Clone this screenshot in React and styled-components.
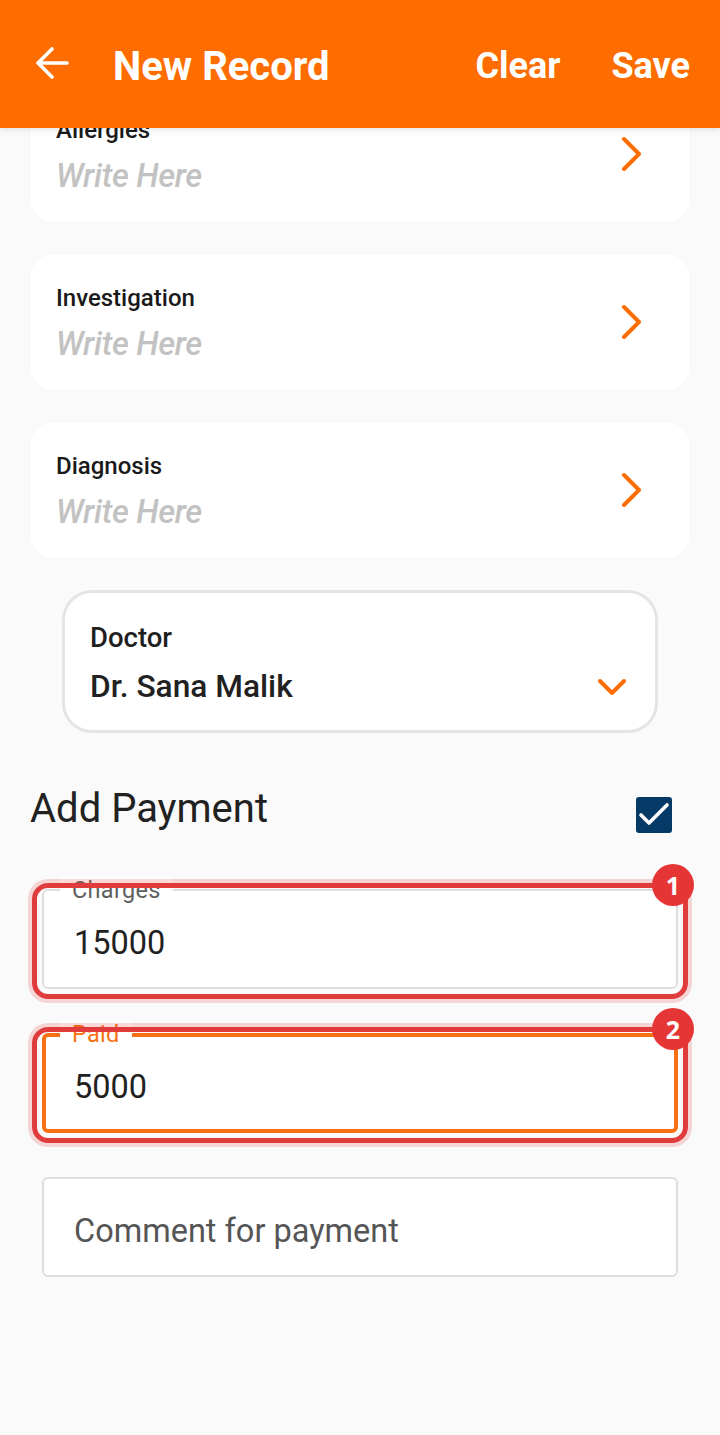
import React from 'react';
import styled, { createGlobalStyle } from 'styled-components';

const GlobalStyle = createGlobalStyle`
  html, body {
    margin: 0;
    padding: 0;
    background: #fafafa;
  }
  * {
    box-sizing: border-box;
  }
`;

const Root = styled.div`
  width: 720px;
  height: 1435px;
  overflow: hidden;
  background: #fafafa;
  font-family: Roboto, 'Liberation Sans', sans-serif;
`;

const Header = styled.header`
  position: relative;
  z-index: 2;
  height: 128px;
  background: #ff6d00;
  box-shadow: 0 2px 6px rgba(0, 0, 0, 0.1);
  padding: 4px 30px 0 36px;
  display: flex;
  align-items: center;
  color: #fff;
`;

const BackIcon = styled.svg`
  width: 33px;
  height: 32px;
  margin-right: 44px;
  margin-top: -6px;
  fill: none;
  stroke: #fff;
  stroke-width: 3.6;
  stroke-linecap: round;
  stroke-linejoin: round;
`;

const Title = styled.h1`
  flex: 1;
  margin: 0;
  font-size: 40px;
  font-weight: 700;
`;

const HeaderAction = styled.span`
  font-size: 36px;
  font-weight: 700;
  margin-left: 51px;
`;

const Content = styled.main`
  margin-top: -42px;
  display: flex;
  flex-direction: column;
`;

const Card = styled.section`
  height: 136px;
  margin: 0 30px 32px;
  background: #fff;
  border-radius: 24px;
  padding: 0 49px 0 26px;
  display: flex;
  align-items: center;
  justify-content: space-between;
  box-shadow: 0 0 4px rgba(0, 0, 0, 0.02);
`;

const CardText = styled.div`
  align-self: flex-start;
  padding-top: 29px;
  display: flex;
  flex-direction: column;
`;

const CardLabel = styled.div`
  font-size: 24px;
  font-weight: 500;
  line-height: 30px;
  color: #1a1a1a;
`;

const Placeholder = styled.div`
  margin-top: 11px;
  font-size: 32.5px;
  font-style: italic;
  font-weight: 500;
  line-height: 40px;
  color: #c2c2c2;
  letter-spacing: -0.3px;
`;

const ChevronIcon = styled.svg`
  fill: none;
  stroke: #ff6d00;
  stroke-width: 4;
  stroke-linecap: round;
  stroke-linejoin: round;
`;

const DoctorSelect = styled.section`
  height: 143px;
  margin: 0 62px 0;
  background: #fff;
  border: 3px solid #e4e4e4;
  border-radius: 30px;
  padding: 28px 29px 0 25px;
`;

const DoctorLabel = styled.div`
  font-size: 27.5px;
  font-weight: 500;
  line-height: 34px;
  color: #1f1f1f;
`;

const DoctorRow = styled.div`
  margin-top: 12px;
  display: flex;
  align-items: center;
  justify-content: space-between;
`;

const DoctorName = styled.div`
  font-size: 31.7px;
  font-weight: 500;
  line-height: 40px;
  color: #212121;
`;

const PaymentRow = styled.div`
  margin: 51px 48px 0 30px;
  display: flex;
  align-items: center;
  justify-content: space-between;
`;

const PaymentTitle = styled.h2`
  margin: 0;
  font-size: 40px;
  font-weight: 400;
  line-height: 50px;
  color: #212121;
`;

const CheckBox = styled.svg`
  width: 36px;
  height: 36px;
  margin-top: 12px;
  border-radius: 3px;
  background: #063a66;
  fill: none;
  stroke: #fff;
  stroke-width: 3.6;
  stroke-linecap: round;
  stroke-linejoin: round;
`;

const Fields = styled.div`
  margin: 0 42px;
  display: flex;
  flex-direction: column;
`;

const Field = styled.div`
  position: relative;
  height: 100px;
  margin-top: ${(p) => p.$top}px;
  padding-top: 8px;
  padding-left: ${(p) => (p.$active ? '28px' : '30px')};
  background: #fff;
  border: ${(p) => (p.$active ? '4px solid #f57113' : '2px solid #dedede')};
  border-radius: 6px;
  display: flex;
  align-items: center;
  font-size: 32.5px;
  color: ${(p) => (p.$muted ? '#555' : '#212121')};
`;

const FieldLabel = styled.span`
  position: absolute;
  top: ${(p) => (p.$active ? '-16px' : '-14px')};
  left: ${(p) => (p.$active ? '14px' : '16px')};
  padding: 0 12px;
  background: #fff;
  font-size: 23.5px;
  letter-spacing: 0.3px;
  line-height: 26px;
  color: ${(p) => (p.$active ? '#f57113' : '#5f5f5f')};
`;

const Highlight = styled.div`
  position: absolute;
  top: ${(p) => -6 - p.$border}px;
  left: ${(p) => -10 - p.$border}px;
  right: ${(p) => -10 - p.$border}px;
  bottom: ${(p) => -10 - p.$border}px;
  border: 5px solid #e03c3c;
  border-radius: 16px;
  box-shadow: 0 0 0 4px rgba(224, 60, 60, 0.2);
`;

const Badge = styled.div`
  position: absolute;
  top: ${(p) => -25 - p.$border}px;
  right: ${(p) => -16 - p.$border}px;
  width: 42px;
  height: 42px;
  border-radius: 50%;
  background: #e53535;
  color: #fff;
  font-family: 'Open Sans', sans-serif;
  font-size: 25px;
  font-weight: 700;
  display: flex;
  align-items: center;
  justify-content: center;
`;

const records = ['Allergies', 'Investigation', 'Diagnosis'];

export default function App() {
  return (
    <Root>
      <GlobalStyle />
      <Header>
        <BackIcon viewBox="0 0 33 32">
          <path d="M31 16H2M16 2L2 16l14 14" />
        </BackIcon>
        <Title>New Record</Title>
        <HeaderAction>Clear</HeaderAction>
        <HeaderAction>Save</HeaderAction>
      </Header>
      <Content>
        {records.map((name) => (
          <Card key={name}>
            <CardText>
              <CardLabel>{name}</CardLabel>
              <Placeholder>Write Here</Placeholder>
            </CardText>
            <ChevronIcon width="20" height="34" viewBox="0 0 20 34">
              <path d="M3 2l15 15L3 32" />
            </ChevronIcon>
          </Card>
        ))}
        <DoctorSelect>
          <DoctorLabel>Doctor</DoctorLabel>
          <DoctorRow>
            <DoctorName>Dr. Sana Malik</DoctorName>
            <ChevronIcon width="28" height="18" viewBox="0 0 28 18">
              <path d="M2 3l12 12L26 3" />
            </ChevronIcon>
          </DoctorRow>
        </DoctorSelect>
        <PaymentRow>
          <PaymentTitle>Add Payment</PaymentTitle>
          <CheckBox viewBox="0 0 36 36">
            <path d="M5 18l8 8L31 8" />
          </CheckBox>
        </PaymentRow>
        <Fields>
          <Field $top={55}>
            <FieldLabel>Charges</FieldLabel>
            15000
            <Highlight $border={2} />
            <Badge $border={2}>1</Badge>
          </Field>
          <Field $top={44} $active>
            <FieldLabel $active>Paid</FieldLabel>
            5000
            <Highlight $border={4} />
            <Badge $border={4}>2</Badge>
          </Field>
          <Field $top={44} $muted>
            Comment for payment
          </Field>
        </Fields>
      </Content>
    </Root>
  );
}
